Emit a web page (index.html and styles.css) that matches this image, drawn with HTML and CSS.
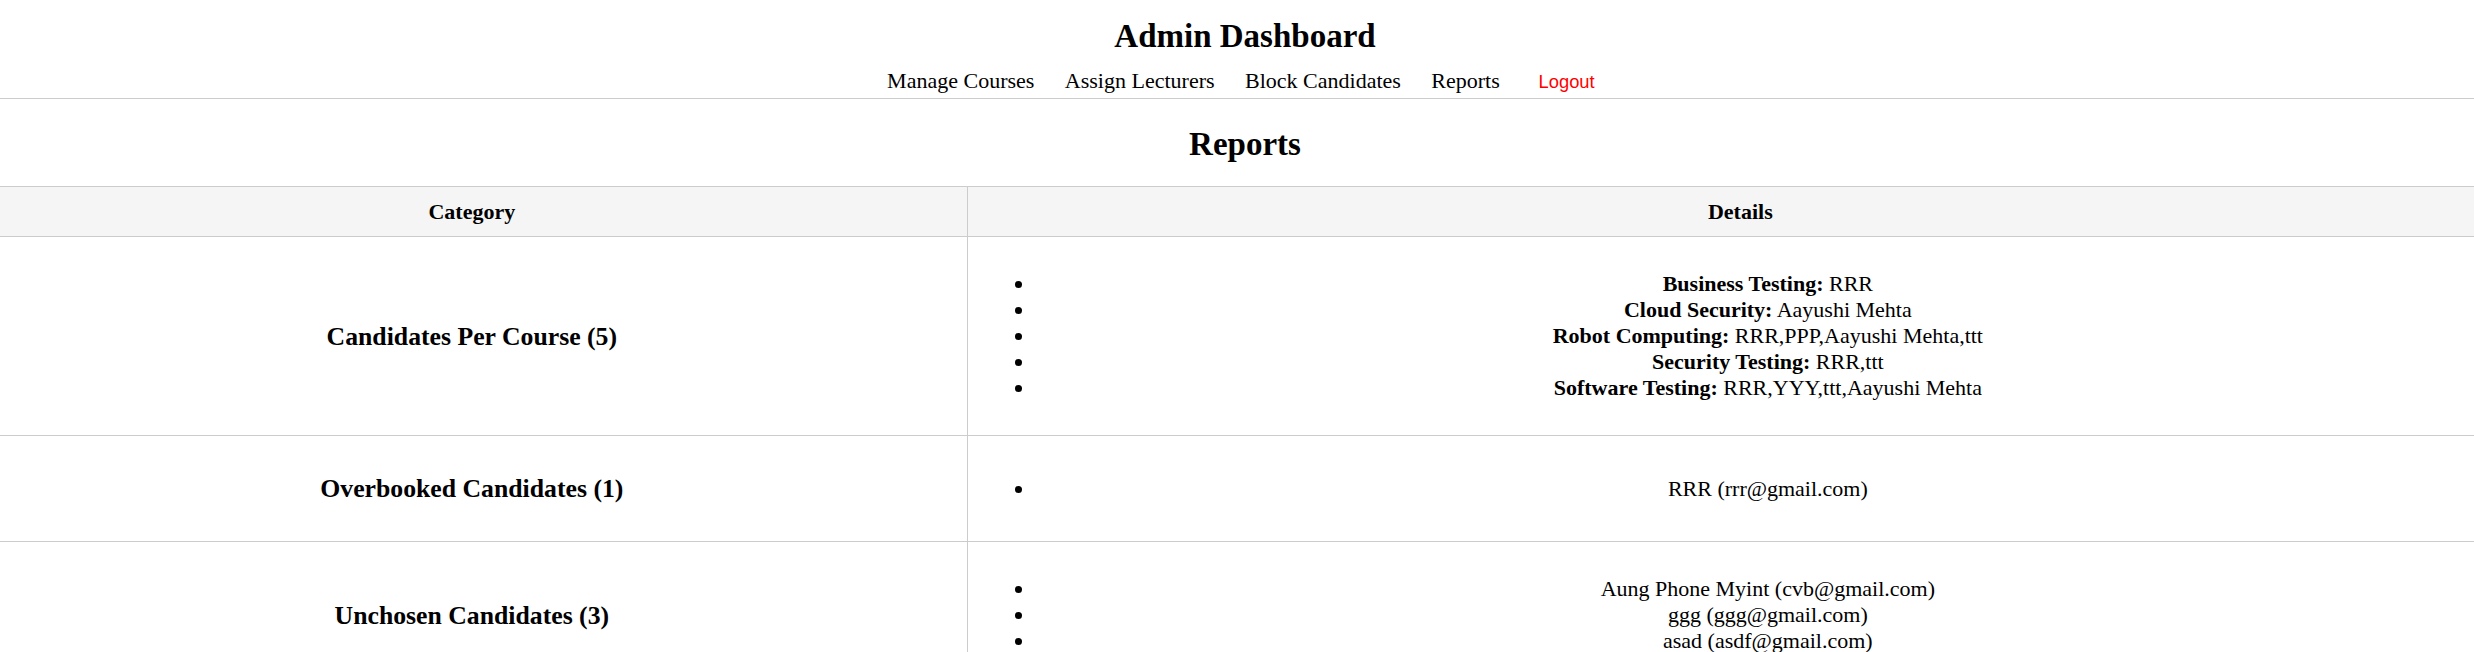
FILE: index.html
```html
<!DOCTYPE html>
<html lang="en">
<head>
<meta charset="utf-8">
<title>Admin Dashboard - Reports</title>
<link rel="stylesheet" href="styles.css">
</head>
<body>
<div class="page">
  <header class="top">
    <h1 class="title">Admin Dashboard</h1>
    <nav class="nav">
      <a class="nav-link" href="#">Manage Courses</a>
      <a class="nav-link" href="#">Assign Lecturers</a>
      <a class="nav-link" href="#">Block Candidates</a>
      <a class="nav-link" href="#">Reports</a>
      <button class="logout" type="button">Logout</button>
    </nav>
  </header>
  <main class="content">
    <h2 class="heading">Reports</h2>
    <table class="report">
      <thead>
        <tr>
          <th class="col-cat">Category</th>
          <th>Details</th>
        </tr>
      </thead>
      <tbody>
        <tr>
          <td><h3 class="cat-title">Candidates Per Course (5)</h3></td>
          <td>
            <ul class="list">
              <li><strong>Business Testing:</strong> RRR</li>
              <li><strong>Cloud Security:</strong> Aayushi Mehta</li>
              <li><strong>Robot Computing:</strong> RRR,PPP,Aayushi Mehta,ttt</li>
              <li><strong>Security Testing:</strong> RRR,ttt</li>
              <li><strong>Software Testing:</strong> RRR,YYY,ttt,Aayushi Mehta</li>
            </ul>
          </td>
        </tr>
        <tr>
          <td><h3 class="cat-title">Overbooked Candidates (1)</h3></td>
          <td>
            <ul class="list">
              <li>RRR (rrr@gmail.com)</li>
            </ul>
          </td>
        </tr>
        <tr>
          <td><h3 class="cat-title">Unchosen Candidates (3)</h3></td>
          <td>
            <ul class="list">
              <li>Aung Phone Myint (cvb@gmail.com)</li>
              <li>ggg (ggg@gmail.com)</li>
              <li>asad (asdf@gmail.com)</li>
            </ul>
          </td>
        </tr>
      </tbody>
    </table>
  </main>
</div>
</body>
</html>
```

FILE: styles.css
```css
html, body {
  margin: 0;
  padding: 0;
  background: #ffffff;
}

body {
  font-family: "Liberation Serif", "Times New Roman", serif;
  font-size: 22px;
  color: #000000;
  overflow: hidden;
}

.page {
  width: calc(100% + 64px);
  margin-left: -24px;
}

.top {
  padding: 17px 0 4px;
  border-bottom: 1px solid #cccccc;
  text-align: center;
}

.title {
  margin: 0;
  font-size: 33px;
  line-height: 38px;
  font-weight: bold;
}

.nav {
  display: flex;
  justify-content: center;
  align-items: baseline;
  gap: 30.5px;
  margin-top: 13px;
  font-size: 22px;
  line-height: 25px;
}

.nav-link {
  color: #000000;
  text-decoration: none;
}

.logout {
  font-family: "Liberation Sans", Arial, sans-serif;
  font-size: 18.33px;
  color: #ff0000;
  background: none;
  border: none;
  padding: 1.4px 8.25px;
  cursor: pointer;
}

.heading {
  margin: 26px 0 23px;
  font-size: 33px;
  line-height: 38px;
  text-align: center;
}

.report {
  width: 100%;
  border-collapse: collapse;
}

.report th {
  background: #f5f5f5;
  border: 1px solid #cccccc;
  padding: 12px;
  font-size: 22px;
  line-height: 25px;
  text-align: center;
}

.report .col-cat {
  width: 39.05%;
}

.report td {
  border: 1px solid #cccccc;
  padding: 12px;
  text-align: center;
  vertical-align: middle;
}

.cat-title {
  margin: 26px 0;
  font-size: 25.74px;
  line-height: 29px;
}

.list {
  margin: 22px 0;
  padding-left: 55px;
  font-size: 22px;
  line-height: 26px;
}
```
